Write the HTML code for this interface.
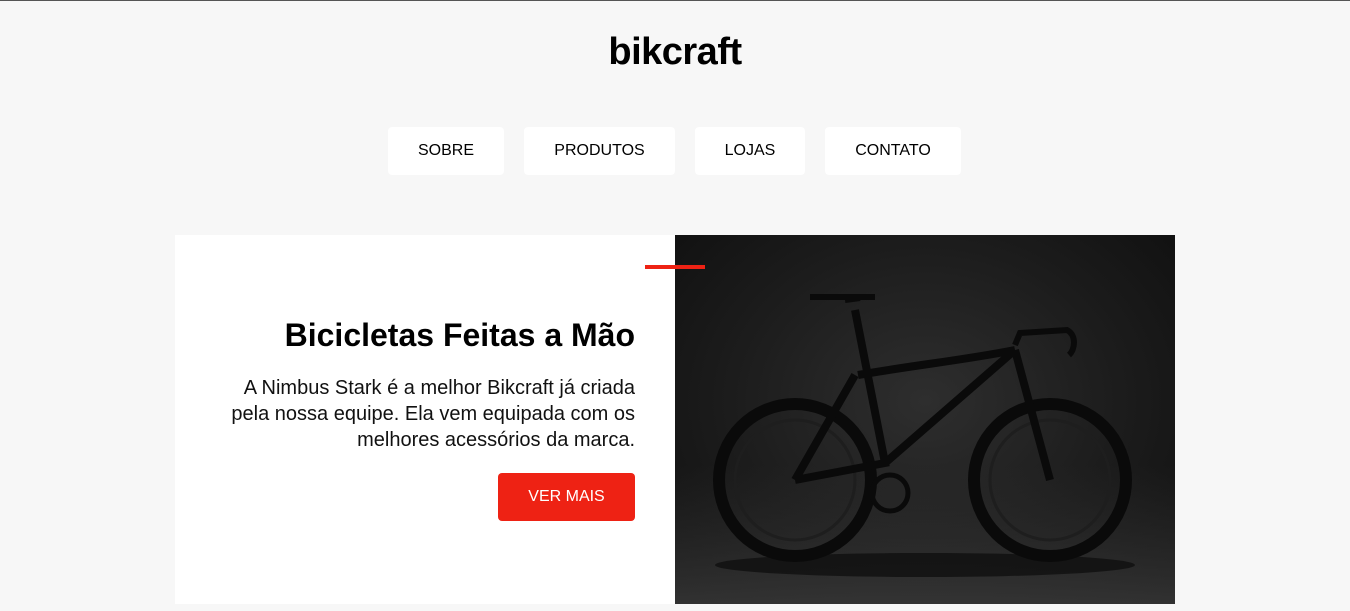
<!DOCTYPE html>
<html><head><meta charset="utf-8"><style>
*{margin:0;padding:0;box-sizing:border-box}
body{width:1350px;height:611px;background:#f7f7f7;font-family:"Liberation Sans",Arial,sans-serif;position:relative;overflow:hidden}
.top{position:absolute;left:0;top:0;width:1350px;height:1px;background:#555}
.logo{position:absolute;top:31px;left:0;width:1350px;text-align:center;font-size:38px;font-weight:bold;letter-spacing:-0.5px;color:#000}
.nav a{position:absolute;top:127px;height:48px;background:#fff;border-radius:4px;font-size:16px;color:#000;text-align:center;line-height:48px;text-decoration:none}
.card{position:absolute;left:175px;top:235px;width:500px;height:369px;background:#fff}
.red{position:absolute;left:645px;top:265px;width:60px;height:4px;background:#ee2214;z-index:3}
h1{position:absolute;right:715px;top:317px;font-size:32px;font-weight:bold;color:#000;white-space:nowrap}
p{position:absolute;right:715px;top:375px;width:410px;text-align:right;font-size:20px;line-height:26px;color:#111}
.btn{position:absolute;left:498px;top:473px;width:137px;height:48px;background:#ee2214;border-radius:4px;color:#fff;font-size:16px;text-align:center;line-height:48px}
.img{position:absolute;left:675px;top:235px;width:500px;height:369px;background:radial-gradient(ellipse at 50% 45%,#2e2e2e 0%,#1c1c1c 55%,#0f0f0f 100%)}
</style></head><body>
<div class="top"></div>
<div class="logo">bikcraft</div>
<div class="nav">
<a style="left:388px;width:116px">SOBRE</a>
<a style="left:524px;width:151px">PRODUTOS</a>
<a style="left:695px;width:110px">LOJAS</a>
<a style="left:825px;width:136px">CONTATO</a>
</div>
<div class="card"></div>
<h1>Bicicletas Feitas a Mão</h1>
<p>A Nimbus Stark é a melhor Bikcraft já criada pela nossa equipe. Ela vem equipada com os melhores acessórios da marca.</p>
<div class="btn">VER MAIS</div>
<div class="img">
<svg width="500" height="369" viewBox="0 0 500 369">
<defs><linearGradient id="f" x1="0" y1="0" x2="0" y2="1"><stop offset="0" stop-color="#333" stop-opacity="0"/><stop offset="1" stop-color="#3a3a3a" stop-opacity=".8"/></linearGradient></defs>
<rect x="0" y="230" width="500" height="139" fill="url(#f)"/>
<ellipse cx="250" cy="330" rx="210" ry="12" fill="#0c0c0c" opacity=".7"/>
<g fill="none" stroke="#0a0a0a">
<circle cx="120" cy="245" r="76" stroke-width="12"/>
<circle cx="375" cy="245" r="76" stroke-width="12"/>
<circle cx="120" cy="245" r="60" stroke="#1e1e1e" stroke-width="3"/>
<circle cx="375" cy="245" r="60" stroke="#1e1e1e" stroke-width="3"/>
<path d="M120 245 L210 228 L180 75 M183 140 C240 130 290 125 340 115 M340 115 L210 228 M340 115 L375 245 M120 245 L180 140" stroke-width="8"/>
<path d="M170 65 L185 63 M340 110 L345 98 L392 95 C402 100 400 115 394 120" stroke-width="6"/>
<path d="M135 62 L200 62" stroke-width="6"/>
<circle cx="215" cy="258" r="18" stroke-width="5"/>
</g>
</svg>
</div>
<div class="red"></div>
</body></html>
